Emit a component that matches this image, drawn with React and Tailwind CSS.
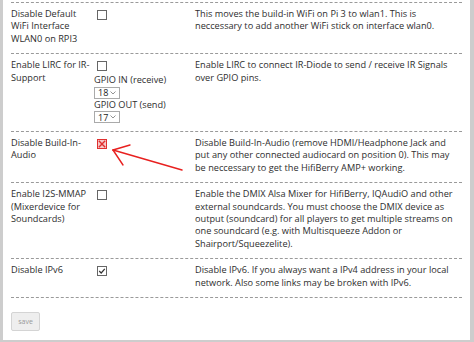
import React from "react";

const Box = ({ checked, marked }) => {
  if (marked)
    return (
      <span className="block w-[10px] h-[10px] border border-[#e0302f] bg-[#f6c9c9] relative">
        <svg viewBox="0 0 10 10" className="absolute" style={{ left: -1, top: -1, width: 10, height: 10 }}>
          <path d="M1.8 1.8 L8.2 8.2 M8.2 1.8 L1.8 8.2" stroke="#e0302f" strokeWidth="1.4" />
        </svg>
      </span>
    );
  return (
    <span className="block w-[10px] h-[10px] border border-[#666] bg-white relative">
      {checked && (
        <svg viewBox="0 0 10 10" className="absolute" style={{ left: -1, top: -1, width: 10, height: 10 }}>
          <path d="M2.2 5 L4.2 7 L7.8 2.8" stroke="#333" strokeWidth="1.2" fill="none" />
        </svg>
      )}
    </span>
  );
};

const Sel = ({ v }) => (
  <div className="w-[26px] h-[12px] border border-[#aaa] bg-white flex items-center justify-between pl-[3px] pr-[3px] text-[9px] leading-none text-[#222]">
    <span>{v}</span>
    <svg width="6" height="4" viewBox="0 0 6 4"><path d="M0.5 0.5 L3 3 L5.5 0.5" stroke="#777" fill="none" strokeWidth="0.8" /></svg>
  </div>
);

const rows = [
  {
    label: "Disable Default WiFi Interface WLAN0 on RPI3",
    desc: "This moves the build-in WiFi on Pi 3 to wlan1. This is neccessary to add another WiFi stick on interface wlan0.",
  },
  {
    label: "Enable LIRC for IR-Support",
    desc: "Enable LIRC to connect IR-Diode to send / receive IR Signals over GPIO pins.",
    gpio: true,
  },
  {
    label: "Disable Build-In-Audio",
    desc: "Disable Build-In-Audio (remove HDMI/Headphone Jack and put any other connected audiocard on position 0). This may be neccessary to get the HifiBerry AMP+ working.",
    marked: true,
  },
  {
    label: "Enable I2S-MMAP (Mixerdevice for Soundcards)",
    desc: "Enable the DMIX Alsa Mixer for HifiBerry, IQAudiO and other external soundcards. You must choose the DMIX device as output (soundcard) for all players to get multiple streams on one soundcard (e.g. with Multisqueeze Addon or Shairport/Squeezelite).",
  },
  {
    label: "Disable IPv6",
    desc: "Disable IPv6. If you always want a IPv4 address in your local network. Also some links may be broken with IPv6.",
    checked: true,
  },
];

export default function App() {
  return (
    <div className="w-[474px] h-[342px] bg-[#cdcdcd] overflow-hidden" style={{ fontFamily: '"Open Sans", sans-serif' }}>
      <div className="relative ml-[3px] w-[467px] h-[340px] bg-white text-[9.2px] leading-[12.4px] text-[#2e2e2e]">
        <div className="pl-[8px] pr-[8px] pt-[2px]">
          {rows.map((r, i) => (
            <div key={i} className="flex border-t border-dashed border-[#9a9a9a] pt-[5px] pb-[8px]">
              <div className="w-[83px] shrink-0">{r.label}</div>
              <div className="w-[101px] shrink-0">
                <div className="pl-[3px] pt-[2px] pb-[2px]">
                  <Box checked={r.checked} marked={r.marked} />
                </div>
                {r.gpio && (
                  <div>
                    <div className="mt-[1px]">GPIO IN (receive)</div>
                    <Sel v="18" />
                    <div>GPIO OUT (send)</div>
                    <Sel v="17" />
                  </div>
                )}
              </div>
              <div className="flex-1 pr-[2px]">{r.desc}</div>
            </div>
          ))}
          <div className="border-t border-dashed border-[#9a9a9a]" />
          <div className="pt-[14px]">
            <button className="w-[29px] h-[19px] bg-[#eeeeee] border border-[#d4d4d4] rounded-[2px] text-[7px] text-[#999] leading-none">save</button>
          </div>
        </div>
        <svg className="absolute left-0 top-0" width="467" height="340" viewBox="0 0 467 340">
          <g stroke="#e8201f" strokeWidth="1.4" fill="none" strokeLinecap="round">
            <path d="M110 150 L179 170" />
            <path d="M110 150 L127 145" />
            <path d="M110 150 L120 165" />
          </g>
        </svg>
      </div>
    </div>
  );
}
